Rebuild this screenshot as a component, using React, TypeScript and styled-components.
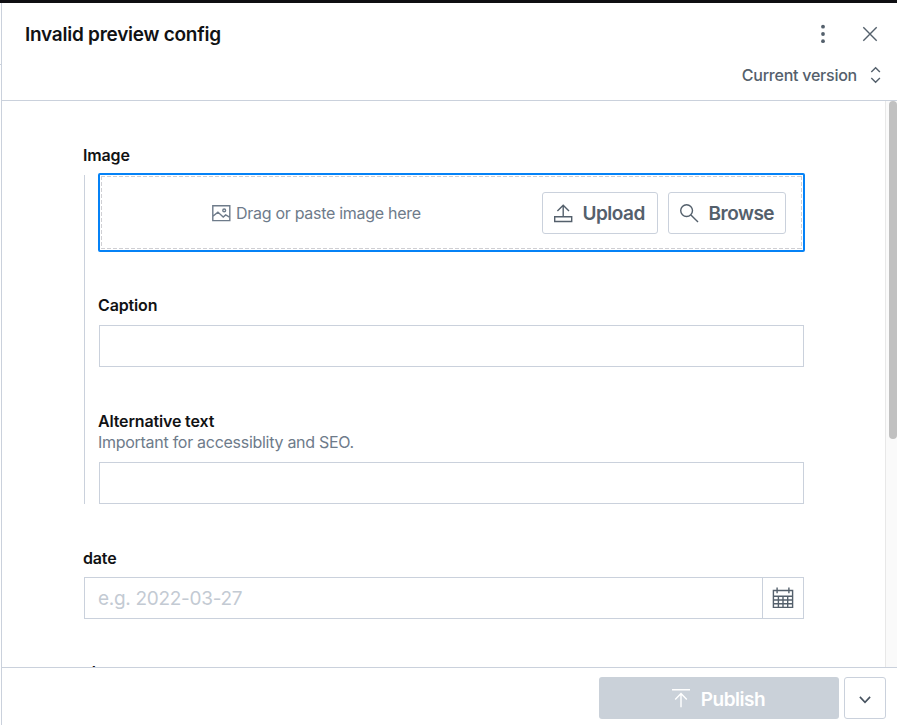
import React from "react";
import styled, { createGlobalStyle } from "styled-components";

const GlobalStyle = createGlobalStyle`
  *, *::before, *::after { box-sizing: border-box; }
  body { margin: 0; background: #fff; overflow: hidden; }
  button, input { font: inherit; letter-spacing: inherit; }
`;

const line = "#cad1dc";
const ink = "#111214";
const slate = "#54606c";
const muted = "#6e7b8a";
const dash = "#cfcfd3 0 4px, transparent 4px 6px";

const Screen = styled.div`
  width: 897px;
  height: 725px;
  display: flex;
  flex-direction: column;
  overflow: hidden;
  border-top: 3px solid #0f0f12;
  font-family: Inter, "Liberation Sans", sans-serif;
  color: ${ink};
`;

const Columns = styled.div`
  flex: 1;
  min-height: 0;
  display: flex;
`;

const PreviousPane = styled.div`
  width: 1px;
  height: 62px;
  border-bottom: 1px solid ${line};
`;

const Pane = styled.main`
  flex: 1;
  min-width: 0;
  display: flex;
  flex-direction: column;
  border-left: 1px solid ${line};
`;

const Header = styled.header`
  height: 98px;
  flex: none;
  border-bottom: 1px solid ${line};
`;

const TitleRow = styled.div`
  height: 62px;
  padding: 0 16px 0 23px;
  display: flex;
  align-items: center;
`;

const Title = styled.h1`
  margin: 0;
  padding-top: 2px;
  flex: 1;
  font-size: 19px;
  font-weight: 600;
  line-height: 24px;
  letter-spacing: -0.25px;
`;

const IconButton = styled.button`
  width: 22px;
  height: 22px;
  padding: 0;
  border: 0;
  background: none;
  color: ${slate};
  & + & { margin-left: 25px; }
`;

const Icon = styled.svg`
  display: block;
  flex: none;
  fill: none;
  stroke: currentColor;
  stroke-width: 1.4;
`;

const VersionButton = styled.button`
  margin: -1px 15px 0 auto;
  padding: 0;
  border: 0;
  background: none;
  display: flex;
  align-items: center;
  gap: 13px;
  height: 22px;
  color: ${slate};
  && { font-size: 16px; letter-spacing: -0.24px; }
  font-weight: 500;
`;

const Body = styled.div`
  flex: 1;
  min-height: 0;
  display: flex;
`;

const Form = styled.form`
  flex: 1;
  min-width: 0;
  padding: 44px 81px 0 81px;
  overflow: hidden;
`;

const Track = styled.div`
  width: 12px;
  padding-left: 3px;
  border-left: 1px solid #e8e8e8;
  background: #fafafa;
`;

const Thumb = styled.div`
  width: 8px;
  height: 338px;
  border-radius: 4px;
  background: #c1c1c1;
`;

const Label = styled.label`
  display: block;
  font-size: 16px;
  font-weight: 600;
  line-height: 21px;
  letter-spacing: -0.15px;
`;

const NextLabel = styled(Label)`
  margin-top: 43px;
`;

const Description = styled.p`
  margin: 0;
  font-size: 16px;
  line-height: 21px;
  letter-spacing: -0.28px;
  color: ${muted};
`;

const Fieldset = styled.div`
  margin: 9px 0 44px 1px;
  height: 329px;
  padding-left: 14px;
  display: flex;
  flex-direction: column;
  border-left: 1px solid ${line};
`;

const DropZone = styled.div`
  margin: -2px -1px 0;
  height: 79px;
  flex: none;
  padding: 1px;
  border: 2px solid #0582f6;
  border-radius: 2px;
`;

const DropArea = styled.div`
  height: 100%;
  padding: 0 16px 0 1px;
  display: flex;
  align-items: center;
  gap: 10px;
  background:
    repeating-linear-gradient(90deg, ${dash}) top / 100% 1px no-repeat,
    repeating-linear-gradient(90deg, ${dash}) bottom / 100% 1px no-repeat,
    repeating-linear-gradient(180deg, ${dash}) left / 1px 100% no-repeat,
    repeating-linear-gradient(180deg, ${dash}) right / 1px 100% no-repeat;
`;

const DropHint = styled.div`
  flex: 1;
  padding: 1px 0 0 110px;
  display: flex;
  align-items: center;
  gap: 5px;
  font-size: 16px;
  line-height: 21px;
  letter-spacing: -0.29px;
  color: ${muted};
`;

const ButtonText = styled.span`
  padding-top: 2px;
  letter-spacing: -0.5px;
`;

const ActionButton = styled.button<{ $width: number }>`
  width: ${(p) => p.$width}px;
  height: 42px;
  padding: 0 0 0 10px;
  display: flex;
  align-items: center;
  gap: 9.5px;
  border: 1px solid ${line};
  border-radius: 3px;
  background: #fff;
  color: ${slate};
  && { font-size: 19px; }
  font-weight: 600;
`;

const Field = styled.div<{ $top: number; $gap: number }>`
  margin-top: ${(p) => p.$top}px;
  margin-left: -1px;
  & > div { margin-top: ${(p) => p.$gap}px; }
`;

const InputBox = styled.div`
  height: 42px;
  margin-left: 1px;
  display: flex;
  border: 1px solid ${line};
`;

const DateBox = styled(InputBox)`
  margin: 8px 0 0 1px;
`;

const TextInput = styled.input`
  flex: 1;
  min-width: 0;
  height: 100%;
  padding: 1px 13px 0;
  border: 0;
  outline: 0;
  background: none;
  && { font-size: 19px; letter-spacing: -0.3px; }
  &::placeholder { color: #c3cad3; opacity: 1; }
`;

const CalendarButton = styled.button`
  width: 41px;
  padding: 0;
  display: grid;
  place-items: center;
  border: 0;
  border-left: 1px solid ${line};
  background: none;
  color: ${slate};
`;

const Footer = styled.footer`
  height: 58px;
  flex: none;
  padding: 9px 11px 0 0;
  display: flex;
  justify-content: flex-end;
  gap: 5px;
  border-top: 1px solid ${line};
`;

const PublishButton = styled.button`
  width: 240px;
  height: 42px;
  padding: 0 2px 0 0;
  display: flex;
  align-items: center;
  justify-content: center;
  gap: 10px;
  border: 0;
  border-radius: 3px;
  background: #cad1d9;
  color: #fff;
  && { font-size: 19px; }
  font-weight: 600;
`;

const MoreButton = styled.button`
  width: 42px;
  height: 42px;
  padding: 3px 0 0 0;
  display: grid;
  place-items: center;
  border: 1px solid ${line};
  border-radius: 3px;
  background: #fff;
  color: #46525f;
`;

const DotsIcon = () => (
  <Icon width="22" height="22" viewBox="0 0 22 22">
    <g fill="currentColor" stroke="none">
      <circle cx="11" cy="3.7" r="1.9" />
      <circle cx="11" cy="11" r="1.9" />
      <circle cx="11" cy="18.2" r="1.9" />
    </g>
  </Icon>
);

const CloseIcon = () => (
  <Icon width="22" height="22" viewBox="0 0 22 22">
    <path d="M4.3 4.3 17.7 17.7M17.7 4.3 4.3 17.7" />
  </Icon>
);

const SelectIcon = () => (
  <Icon width="12" height="18" viewBox="0 0 12 18">
    <path d="M1.3 6 5.6 1.8 9.9 6M1.3 12 5.6 16.2 9.9 12" />
  </Icon>
);

const ImageIcon = () => (
  <Icon width="19" height="17" viewBox="0 0 19 17">
    <path d="M.8.8h17v14.8H.8zM.9 11.3l5-4.2 5.3 5 2.5-2.2 4.2 2.4" />
    <circle cx="12.2" cy="5.4" r="1.4" />
  </Icon>
);

const UploadIcon = () => (
  <Icon width="20" height="20" viewBox="0 0 20 20">
    <path d="M1.7 13.8h17v4.7h-17zM10.2 13.8V2.3M4.4 8l5.8-5.8L16 8" />
  </Icon>
);

const SearchIcon = () => (
  <Icon width="20" height="20" viewBox="0 0 20 20">
    <circle cx="7.6" cy="7.6" r="5.9" />
    <path d="m11.9 11.9 7.1 7.1" />
  </Icon>
);

const CalendarIcon = () => (
  <Icon width="22" height="22" viewBox="0 0 22 22">
    <path d="M1.4 3.5h19.2v16.9H1.4zM1.4 9.3h19.2M5.1.6v5.6M16.9.6v5.6" />
    <path d="M1.4 13h19.2M1.4 16.7h19.2M6.4 9.3v11M11 9.3v11M15.7 9.3v11" />
  </Icon>
);

const PublishIcon = () => (
  <Icon width="20" height="20" viewBox="0 0 20 20">
    <path d="M1 1.7h18M10 19.3V5.8M4.2 11.4 10 5.6l5.8 5.8" />
  </Icon>
);

const ChevronIcon = () => (
  <Icon width="14" height="10" viewBox="0 0 14 10">
    <path d="M1.9 1.9 7 7.4 12.1 1.9" strokeWidth="1.6" />
  </Icon>
);

export default function App() {
  return (
    <>
      <GlobalStyle />
      <Screen>
        <Columns>
          <PreviousPane />
          <Pane>
            <Header>
              <TitleRow>
                <Title>Invalid preview config</Title>
                <IconButton aria-label="Menu"><DotsIcon /></IconButton>
                <IconButton aria-label="Close"><CloseIcon /></IconButton>
              </TitleRow>
              <VersionButton>
                <span>Current version</span>
                <SelectIcon />
              </VersionButton>
            </Header>
            <Body>
              <Form>
                <Label>Image</Label>
                <Fieldset>
                  <DropZone>
                    <DropArea>
                      <DropHint>
                        <ImageIcon />
                        <span>Drag or paste image here</span>
                      </DropHint>
                      <ActionButton type="button" $width={116}>
                        <UploadIcon />
                        <ButtonText>Upload</ButtonText>
                      </ActionButton>
                      <ActionButton type="button" $width={118}>
                        <SearchIcon />
                        <ButtonText>Browse</ButtonText>
                      </ActionButton>
                    </DropArea>
                  </DropZone>
                  <Field $top={43} $gap={9}>
                    <Label>Caption</Label>
                    <InputBox><TextInput aria-label="Caption" /></InputBox>
                  </Field>
                  <Field $top={44} $gap={9}>
                    <Label>Alternative text</Label>
                    <Description>Important for accessiblity and SEO.</Description>
                    <InputBox><TextInput aria-label="Alternative text" /></InputBox>
                  </Field>
                </Fieldset>
                <Label>date</Label>
                <DateBox>
                  <TextInput aria-label="date" placeholder="e.g. 2022-03-27" />
                  <CalendarButton type="button" aria-label="Open calendar"><CalendarIcon /></CalendarButton>
                </DateBox>
                <NextLabel>slug</NextLabel>
              </Form>
              <Track><Thumb /></Track>
            </Body>
            <Footer>
              <PublishButton>
                <PublishIcon />
                <ButtonText>Publish</ButtonText>
              </PublishButton>
              <MoreButton aria-label="More actions"><ChevronIcon /></MoreButton>
            </Footer>
          </Pane>
        </Columns>
      </Screen>
    </>
  );
}
